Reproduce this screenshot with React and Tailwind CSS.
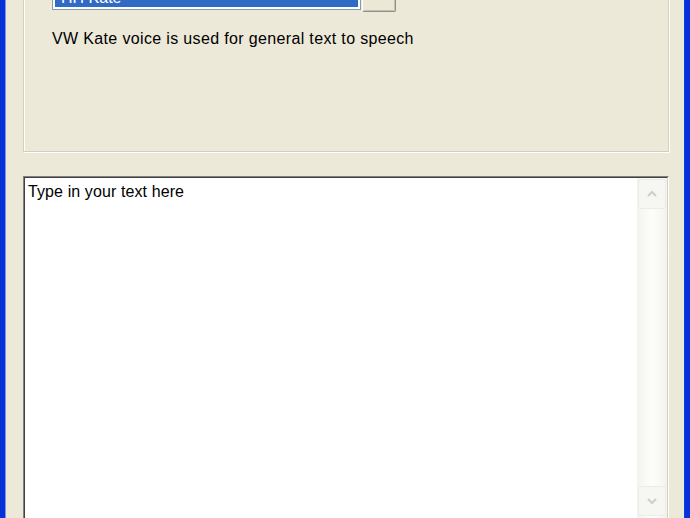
import React from 'react';

const font = { fontFamily: '"Liberation Sans", Arial, sans-serif' };

const ScrollBtn = ({ up }) => (
  <div className='w-[28px] h-[30px] mx-[1px] rounded-[3px] border border-[#ecebe4] bg-[#f6f6f2] flex items-center justify-center'>
    <svg width='12' height='8' viewBox='0 0 12 8'>
      <path d={up ? 'M2 6 L6 2 L10 6' : 'M2 2 L6 6 L10 2'} fill='none' stroke='#cfcfc8' strokeWidth='2' />
    </svg>
  </div>
);

export default function App() {
  return (
    <div className='w-[690px] h-[518px] overflow-hidden flex bg-[#0a3ad8]' style={font}>
      <div className='w-[5px] bg-[#0831d9]' />
      <div className='flex-1 bg-[#ece9d8] pl-[17px] pr-[15px] flex flex-col border-l border-[#7a96df]'>
        <div className='shrink-0 mt-[-30px] h-[182px] border border-[#d0d0bf] shadow-[inset_1px_1px_0_#ffffff,1px_1px_0_#ffffff] pl-[28px] pt-[15px]'>
          <div className='flex items-start'>
            <div className='w-[309px] h-[24px] border border-[#7f9db9] bg-white p-[2px]'>
              <div className='h-full bg-[#316ac5] text-white text-[16px] leading-[18px] px-[6px]'>HH Kate</div>
            </div>
            <div className='ml-[1px] w-[34px] h-[26px] rounded-[2px] border border-[#8e8f8f] border-t-[#ffffff] border-l-[#ffffff] bg-[#ebe8d6] shadow-[inset_-1px_-1px_0_#c5c2b2]' />
          </div>
          <div className='mt-[17px] text-[16px] leading-[20px] text-black tracking-[0.35px]'>VW Kate voice is used for general text to speech</div>
        </div>
        <div className='shrink-0 mt-[24px] h-[360px] border border-[#808080] border-r-[#ffffff] border-b-[#ffffff] flex'>
          <div className='flex-1 flex border border-[#404040] border-r-[#d4d0c8] border-b-[#d4d0c8] bg-white'>
            <div className='flex-1 pl-[3px] pt-[4px] text-[16px] leading-[20px] text-black tracking-[0.1px]'>Type in your text here</div>
            <div className='w-[30px] bg-gradient-to-r from-[#f3f3ee] via-[#fdfdfa] to-[#f3f3ee] flex flex-col pt-[1px]'>
              <ScrollBtn up />
              <div className='h-[277px]' />
              <ScrollBtn />
            </div>
          </div>
        </div>
      </div>
      <div className='w-[6px] bg-[#0831d9] border-l border-[#0c43e0]' />
    </div>
  );
}
